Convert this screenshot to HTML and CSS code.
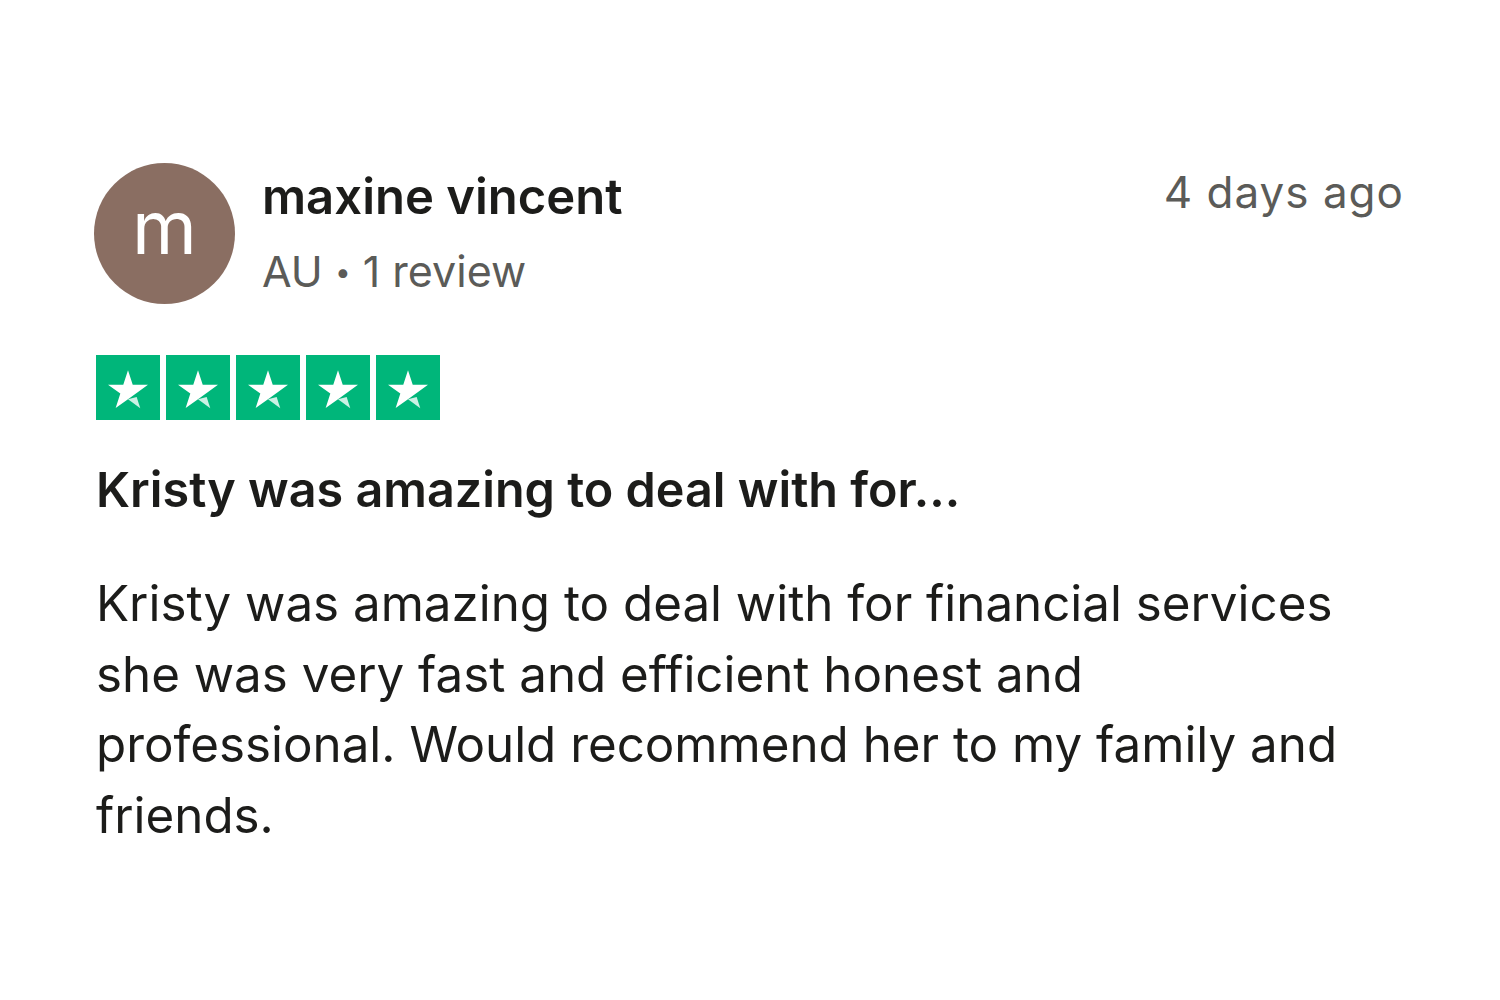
FILE: index.html
```html
<!DOCTYPE html>
<html lang="en">
<head>
<meta charset="utf-8">
<title>Review</title>
<link rel="stylesheet" href="styles.css">
</head>
<body>
<article class="review">
  <header class="review-header">
    <div class="avatar"><span>m</span></div>
    <div class="consumer">
      <div class="name">maxine vincent</div>
      <div class="meta">AU <span class="dot">•</span> 1 review</div>
    </div>
    <time class="date">4 days ago</time>
  </header>
  <div class="stars">
    <span class="star"><svg viewBox="0 0 96 96"><path d="M78 43H55.1L48 21.4 40.9 43H18l18.5 13.4-7 21.6L48 64.7l11.4-8.2z" fill="#fff"/><path d="M48 64.7l13-3.3 5.4 16.8z" fill="#fff" opacity="0.8"/></svg></span>
    <span class="star"><svg viewBox="0 0 96 96"><path d="M78 43H55.1L48 21.4 40.9 43H18l18.5 13.4-7 21.6L48 64.7l11.4-8.2z" fill="#fff"/><path d="M48 64.7l13-3.3 5.4 16.8z" fill="#fff" opacity="0.8"/></svg></span>
    <span class="star"><svg viewBox="0 0 96 96"><path d="M78 43H55.1L48 21.4 40.9 43H18l18.5 13.4-7 21.6L48 64.7l11.4-8.2z" fill="#fff"/><path d="M48 64.7l13-3.3 5.4 16.8z" fill="#fff" opacity="0.8"/></svg></span>
    <span class="star"><svg viewBox="0 0 96 96"><path d="M78 43H55.1L48 21.4 40.9 43H18l18.5 13.4-7 21.6L48 64.7l11.4-8.2z" fill="#fff"/><path d="M48 64.7l13-3.3 5.4 16.8z" fill="#fff" opacity="0.8"/></svg></span>
    <span class="star"><svg viewBox="0 0 96 96"><path d="M78 43H55.1L48 21.4 40.9 43H18l18.5 13.4-7 21.6L48 64.7l11.4-8.2z" fill="#fff"/><path d="M48 64.7l13-3.3 5.4 16.8z" fill="#fff" opacity="0.8"/></svg></span>
  </div>
  <h2 class="title">Kristy was amazing to deal with for...</h2>
  <p class="text">Kristy was amazing to deal with for financial services she was very fast and efficient honest and professional. Would recommend her to my family and friends.</p>
</article>
</body>
</html>
```

FILE: styles.css
```css
html, body {
  margin: 0;
  padding: 0;
  background: #ffffff;
}

body {
  font-family: Inter, "Liberation Sans", sans-serif;
  color: #1c1c1a;
  width: 1500px;
  height: 1000px;
  overflow: hidden;
}

.review {
  padding: 163px 96px 0 94px;
  width: 1310px;
}

.review-header {
  display: flex;
  align-items: flex-start;
}

.avatar {
  width: 141px;
  height: 141px;
  border-radius: 50%;
  background: #8a6e62;
  color: #ffffff;
  display: flex;
  align-items: center;
  justify-content: center;
  flex-shrink: 0;
}

.avatar span {
  font-size: 74px;
  line-height: 1;
  font-weight: 400;
  margin-top: -14px;
}

.consumer {
  margin-left: 27px;
  flex: 1;
  padding-top: 4px;
}

.name {
  font-size: 49px;
  font-weight: 600;
  line-height: 60px;
  color: #1c1c1a;
}

.meta {
  font-size: 43px;
  line-height: 50px;
  margin-top: 19px;
  color: #5b5b58;
}

.dot {
  font-size: 28px;
  vertical-align: 5px;
}

.date {
  font-size: 44px;
  line-height: 50px;
  color: #5b5b58;
  padding-top: 4px;
  letter-spacing: 1px;
}

.stars {
  display: flex;
  gap: 6px;
  margin-top: 51px;
  margin-left: 2px;
}

.star {
  width: 64px;
  height: 65px;
  background: #00b67a;
  display: flex;
  align-items: center;
  justify-content: center;
}

.star svg {
  width: 64px;
  height: 64px;
  display: block;
}

.title {
  margin: 40px 0 0 2px;
  font-size: 48.5px;
  font-weight: 600;
  line-height: 60px;
  color: #1c1c1a;
}

.text {
  margin: 48px 0 0 2px;
  max-width: 1274px;
  font-size: 49.3px;
  font-weight: 400;
  line-height: 70.5px;
  color: #1c1c1a;
}
```
